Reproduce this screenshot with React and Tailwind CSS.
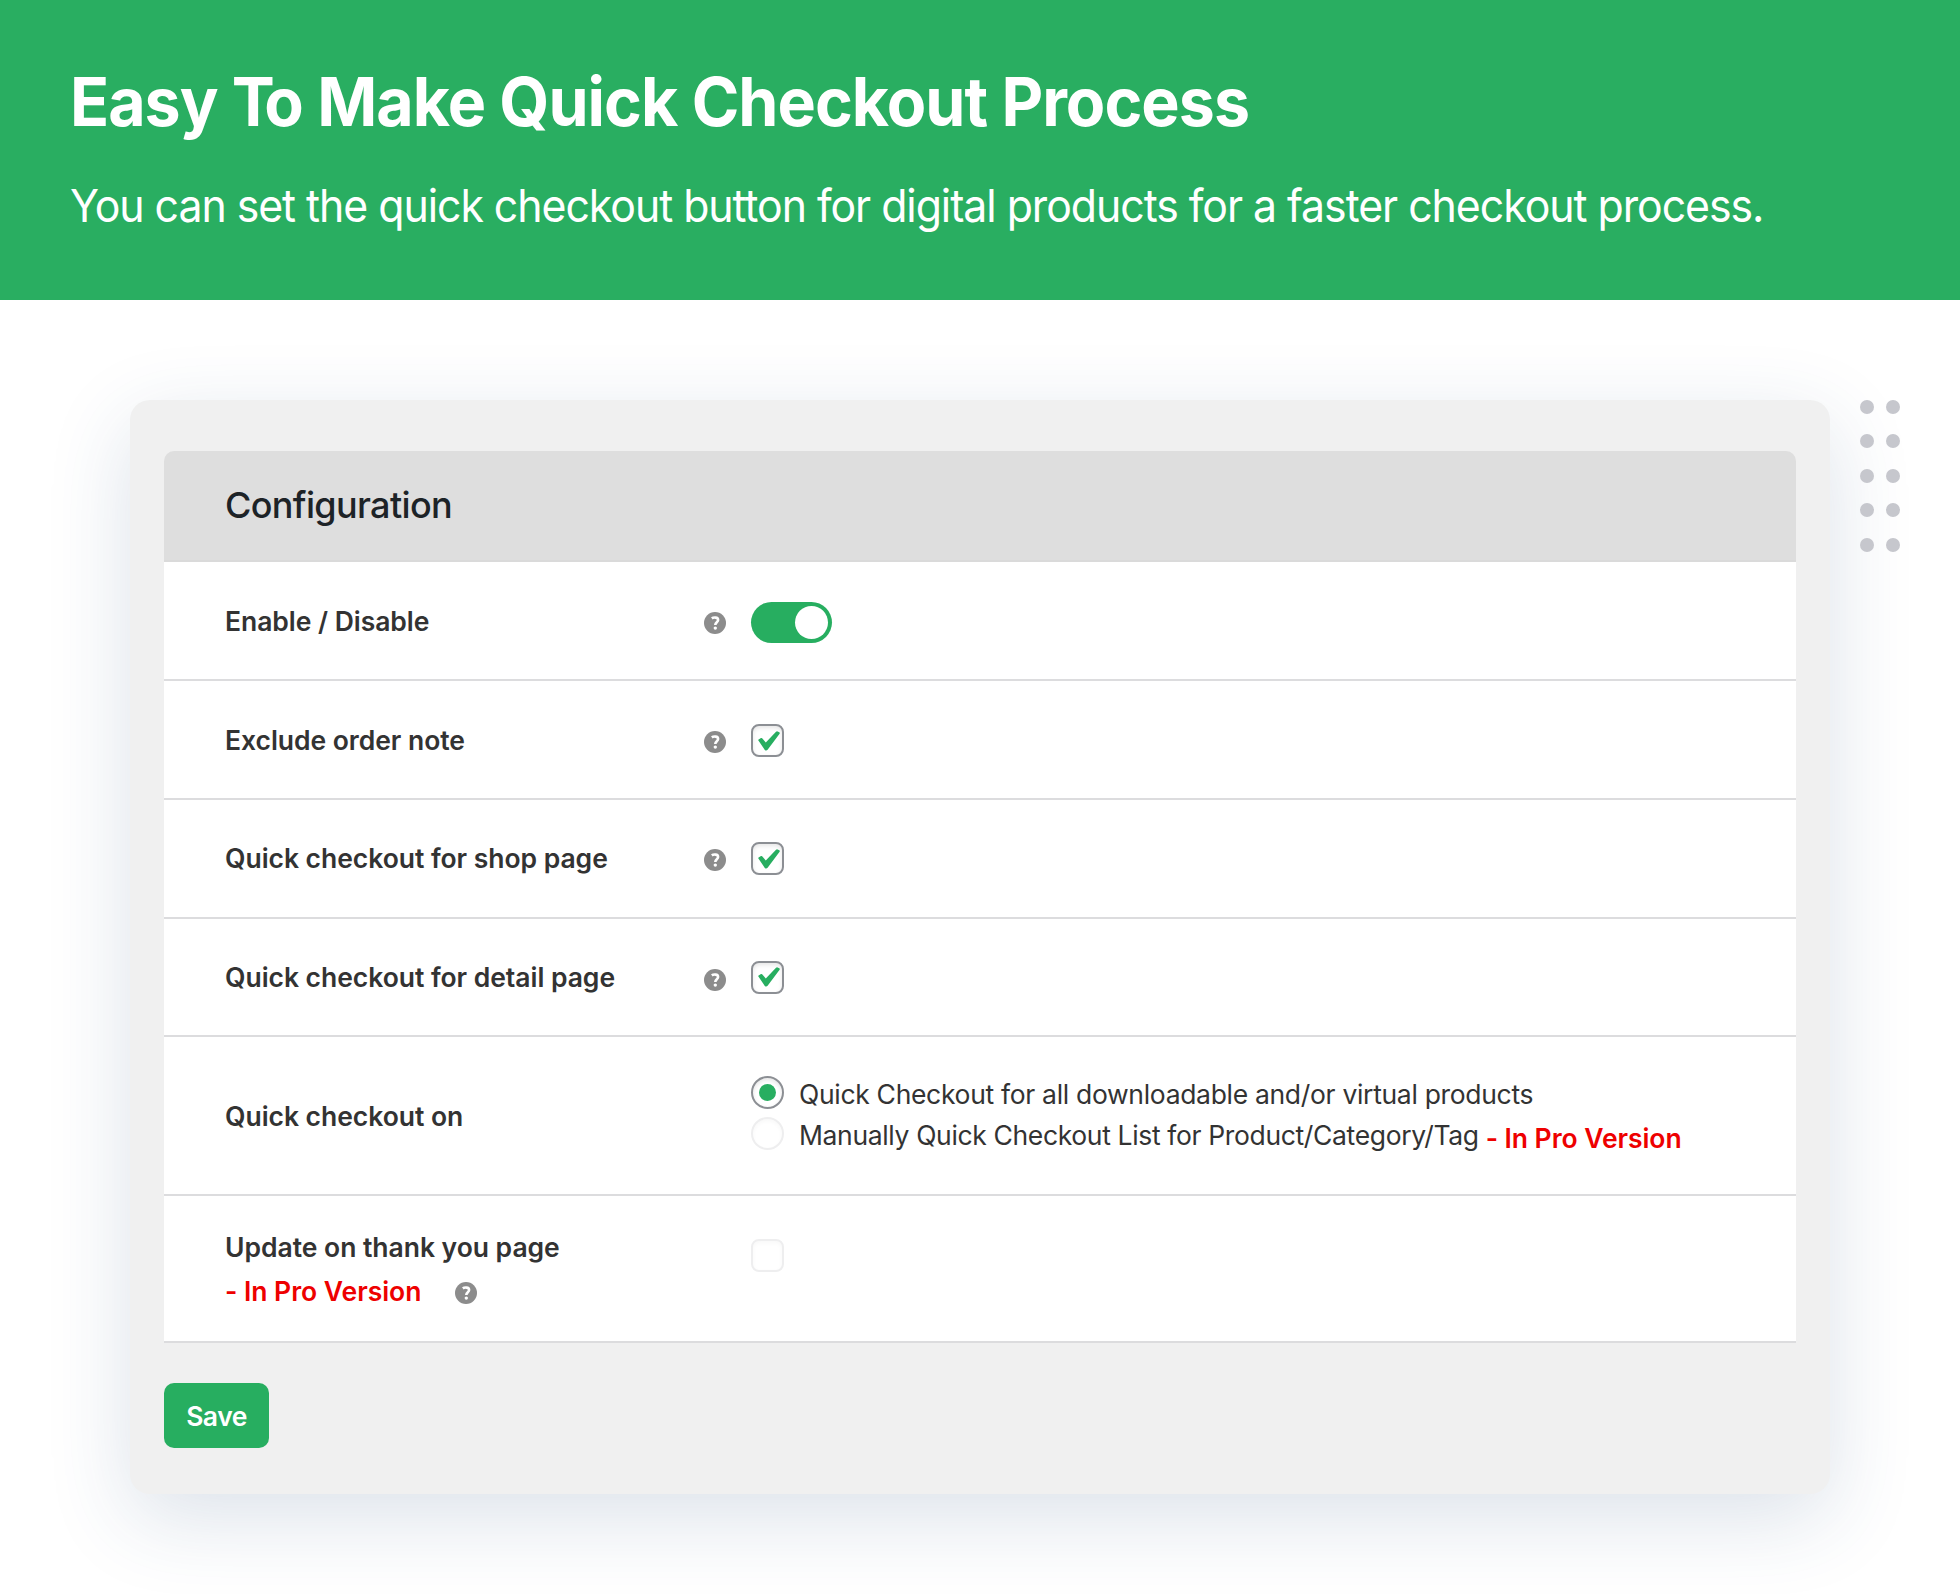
const DOTS = Array.from({ length: 10 });

function HelpIcon({ className = "" }) {
  return (
    <svg viewBox="0 0 22 22" className={`h-[22px] w-[22px] shrink-0 ${className}`} fill="none">
      <circle cx="11" cy="11" r="11" fill="#8c8c8c" />
      <path
        d="M7.8 6.4C9.3 5.3 14.1 4.8 14.1 8c0 2.2-2.8 2.2-2.8 4.9"
        stroke="#fff"
        strokeWidth="2.6"
      />
      <circle cx="11.3" cy="16.1" r="1.7" fill="#fff" />
    </svg>
  );
}

function Toggle() {
  return (
    <div className="flex h-[41px] w-[81px] items-center justify-end rounded-full bg-[#27ae60] pr-1">
      <div className="h-[33px] w-[33px] rounded-full bg-white" />
    </div>
  );
}

function CheckedBox() {
  return (
    <div className="flex h-[33px] w-[33px] items-center justify-center rounded-[8px] border-2 border-[#8c8f94] bg-white shadow-[inset_0_2px_4px_rgba(0,0,0,0.1)]">
      <svg viewBox="0 0 22 20" className="ml-[2px] h-5 w-[22px]" fill="#27ae60">
        <path d="M0.4 9.6Q0 9 0.6 8.6L3 7.1Q3.8 6.7 4.4 7.4L7.8 11.6L18 0.7Q18.8 0 19.6 0.4L21.3 1.3Q22.2 1.9 21.6 2.7L9.6 18.8Q8.2 20.3 6.8 18.9Z" />
      </svg>
    </div>
  );
}

function Row({ label, help, height, pad = "", helpPad = "", children }) {
  return (
    <div className={`flex items-center border-b-2 border-[#dcdcde] bg-white pl-[61px] ${height}`}>
      <div className="flex w-[526px] items-center justify-between pr-[25px]">
        <span className={`text-[26.5px] leading-8 font-semibold tracking-[-0.04px] ${pad}`}>{label}</span>
        {help && <HelpIcon className={helpPad} />}
      </div>
      {children}
    </div>
  );
}

export default function App() {
  return (
    <div className="h-[1594px] w-[1960px] overflow-hidden bg-white font-['Inter',sans-serif] text-[#333333]">
      <header className="h-[300px] bg-[#29ae61] pt-[62px] pl-[70px] text-white">
        <h1 className="origin-left scale-x-[0.955] text-[67.5px] leading-[80px] font-bold tracking-[-1.035px] whitespace-nowrap">
          Easy <span className="tracking-[-11px]">T</span>o Make Quick Checkout Process
        </h1>
        <p className="mt-[36px] origin-left scale-x-[0.94] text-[45.5px] leading-[56px] tracking-[-1.093px] whitespace-nowrap">
          You can set the quick checkout button for digital products for a faster checkout process.
        </p>
      </header>

      <div className="flex items-start pt-[100px] pl-[130px]">
        <main className="h-[1094px] w-[1700px] rounded-[20px] bg-[#f0f0f0] px-[34px] pt-[51px] shadow-[0_24px_84px_0_rgba(40,80,130,0.165)]">
          <section className="w-[1632px]">
            <div className="flex h-[111px] items-center rounded-t-[10px] border-b-2 border-[#dadada] bg-[#dedede] pl-[61px]">
              <h2 className="pb-[2px] text-[36px] font-medium tracking-[-0.656px] text-[#1d2327]">Configuration</h2>
            </div>
            <Row label="Enable / Disable" help height="h-[119px]" helpPad="mt-[5px]">
              <div className="pt-1">
                <Toggle />
              </div>
            </Row>
            <Row label="Exclude order note" help height="h-[119px]" helpPad="mt-[4px]">
              <div className="pt-[2px]">
                <CheckedBox />
              </div>
            </Row>
            <Row label="Quick checkout for shop page" help height="h-[119px]" pad="pb-[2px]" helpPad="mt-[3px]">
              <CheckedBox />
            </Row>
            <Row label="Quick checkout for detail page" help height="h-[118px]" helpPad="mt-[5px]">
              <CheckedBox />
            </Row>
            <Row label="Quick checkout on" height="h-[159px]">
              <div className="pb-[5px] text-[26.5px] leading-[41px]">
                <div className="flex h-[41px] items-center">
                  <div className="mr-[15px] flex h-[33px] w-[33px] items-center justify-center rounded-full border-2 border-[#8c8f94] shadow-[inset_0_2px_4px_rgba(0,0,0,0.1)]">
                    <div className="h-[17px] w-[17px] rounded-full bg-[#27ae60]" />
                  </div>
                  <span className="pt-[3px] tracking-[-0.316px]">
                    Quick Checkout for all downloadable and/or virtual products
                  </span>
                </div>
                <div className="flex h-[41px] items-center">
                  <div className="mr-[15px] h-[33px] w-[33px] rounded-full border-2 border-[#eeeeef] shadow-[inset_0_2px_4px_rgba(0,0,0,0.03)]" />
                  <span className="pt-[3px] tracking-[-0.353px]">
                    Manually Quick Checkout List for Product/Category/Tag
                  </span>
                  <span className="pt-[9px] pl-[7px] font-semibold tracking-[-0.063px] text-[#ee0000]">
                    - In Pro Version
                  </span>
                </div>
              </div>
            </Row>
            <div className="flex h-[147px] border-b-2 border-[#dcdcde] bg-white pl-[61px]">
              <div className="w-[526px] pt-[29px] text-[26.5px] leading-[44px] font-semibold tracking-[-0.03px]">
                <div>Update on thank you page</div>
                <div className="flex items-center text-[#ee0000]">
                  - In Pro Version
                  <HelpIcon className="mt-[4px] ml-[34px]" />
                </div>
              </div>
              <div className="mt-[43px] h-[33px] w-[33px] rounded-[8px] border-2 border-[#eeeeef] shadow-[inset_0_2px_4px_rgba(0,0,0,0.03)]" />
            </div>
          </section>
          <button className="mt-[40px] flex h-[65px] w-[105px] items-center justify-center rounded-[10px] bg-[#27ae60] pt-[2px] text-[26.5px] font-semibold tracking-[-0.5px] text-white">
            Save
          </button>
        </main>
        <div className="ml-[30px] grid grid-cols-2 gap-x-[12px] gap-y-[20.4px]">
          {DOTS.map((_, i) => (
            <span key={i} className="h-[14px] w-[14px] rounded-full bg-[#c6c7cd]" />
          ))}
        </div>
      </div>
    </div>
  );
}
